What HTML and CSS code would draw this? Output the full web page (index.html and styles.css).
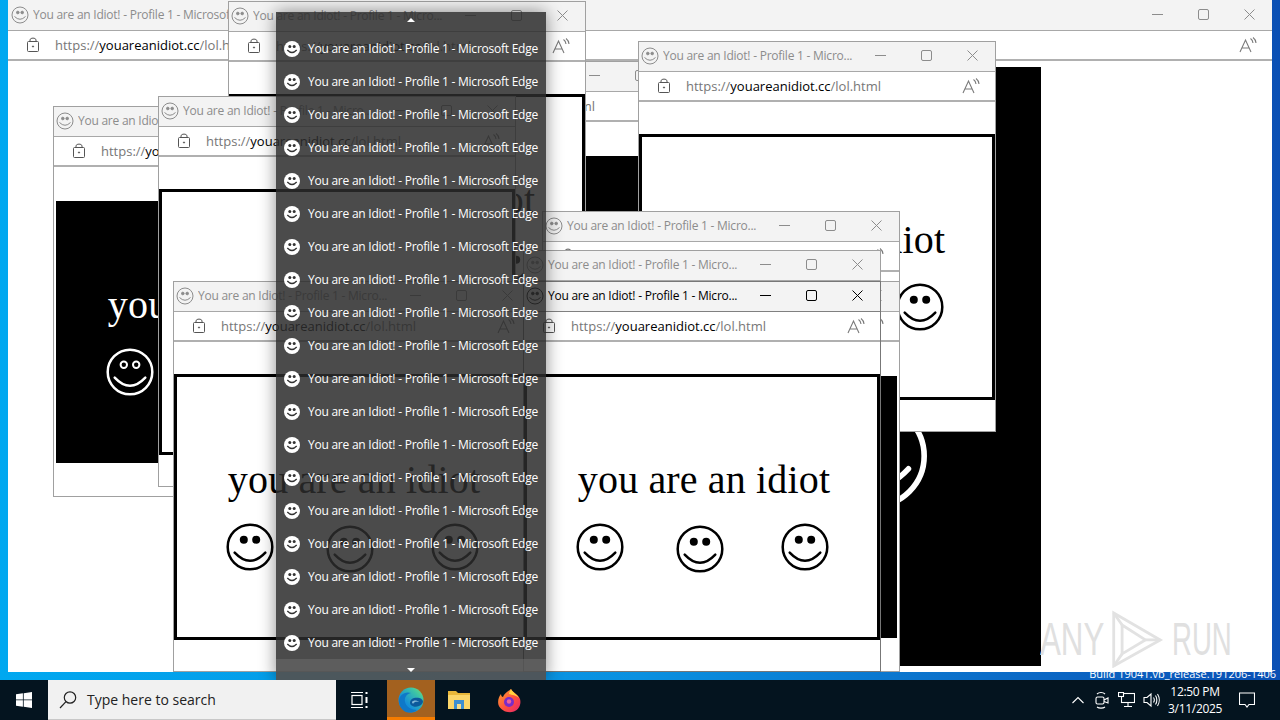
FILE: index.html
```html
<!DOCTYPE html>
<html lang="en">
  <head>
    <meta charset="UTF-8" />
    <title>You are an Idiot!</title>
    <link rel="stylesheet" href="styles.css">
  </head>
  <body>
    <div class="desktop" id="desktop">
      <div class="build">Build 19041.vb_release.191206-1406</div>

      <!-- windows go here, see script.js -->
      <div id="windows"></div>

      <div class="watermark">
        <span>ANY</span>
        <svg width="54" height="58" viewBox="0 0 58 62" fill="none" stroke="#e2e2e2" stroke-width="3">
          <path d="M4 3 L54 32 L4 60 Z" />
          <path d="M13 16 L38 32 L13 47 Z" />
          <path d="M4 3 L13 16 M54 32 L38 32 M4 60 L13 47" />
        </svg>
        <span>RUN</span>
      </div>

      <!-- Jump list -->
      <div class="jumplist">
        <div class="jump-top"><span class="arrow up"></span></div>
        <div class="jump-rows" id="jumpRows"></div>
        <div class="jump-bottom"><span class="arrow down"></span></div>
      </div>
    </div>

    <div class="taskbar">
      <div class="start">
        <svg width="16" height="16" viewBox="0 0 16 16" fill="#fff">
          <path d="M0 2.3 L6.9 1.3 V7.5 H0 Z" />
          <path d="M7.7 1.2 L16 0 V7.5 H7.7 Z" />
          <path d="M0 8.3 H6.9 V14.7 L0 13.7 Z" />
          <path d="M7.7 8.3 H16 V16 L7.7 14.8 Z" />
        </svg>
      </div>
      <div class="search">
        <svg width="20" height="20" viewBox="0 0 20 20" fill="none" stroke="#222" stroke-width="1.2">
          <circle cx="12" cy="7.5" r="5.7" />
          <path d="M8 11.6 L2 18" />
        </svg>
        <span>Type here to search</span>
      </div>
      <div class="task-btn">
        <svg width="18" height="18" viewBox="0 0 18 18" fill="none" stroke="#fff" stroke-width="1.2">
          <path d="M0 1.5 H12 M0 16.5 H12" />
          <rect x="1" y="4.5" width="10" height="9" />
          <path d="M15.5 1 V3 M15.5 6 V12 M15.5 15 V17" stroke-width="2" />
        </svg>
      </div>
      <div class="task-btn open">
        <svg width="26" height="26" viewBox="0 0 26 26">
          <defs>
            <linearGradient id="edgeA" x1="0" y1="1" x2="1" y2="0">
              <stop offset="0.35" stop-color="#1690d8" />
              <stop offset="0.75" stop-color="#3ec6a4" />
              <stop offset="1" stop-color="#86dc6a" />
            </linearGradient>
          </defs>
          <circle cx="13" cy="13" r="12.5" fill="url(#edgeA)" />
          <path d="M1 14 C1 8 7 4 13 6 C8 7 6 11 7 15 C8 20 14 23 19 23 C15 26 11 26 8 25 C4 23 1 19 1 14 Z" fill="#0f78c8" />
          <path d="M25 15 C25 11 20 10 16 11 C12 12 11 16 13 18 C16 21 21 20 24 17 Z" fill="#0c5a9c" />
          <path d="M14 15 C15 13 19 13 21 15 C18 14.500 16 15 15.500 16.500 C14.500 16.500 14 16 14 15 Z" fill="#7fb6d8" />
        </svg>
      </div>
      <div class="task-btn">
        <svg width="24" height="20" viewBox="0 0 24 20">
          <path d="M1 1 H9 L11 3 H23 V6 H1 Z" fill="#e8b73a" />
          <rect x="1" y="5" width="22" height="14" fill="#fbd66a" />
          <rect x="7" y="10" width="10" height="9" fill="#3d8fd1" />
          <rect x="10" y="14" width="4" height="5" fill="#f6dd8a" />
        </svg>
      </div>
      <div class="task-btn">
        <svg width="24" height="25" viewBox="0 0 24 25">
          <defs>
            <linearGradient id="foxA" x1="0" y1="0" x2="1" y2="1">
              <stop offset="0" stop-color="#ffa52e" />
              <stop offset="0.55" stop-color="#ff4f3e" />
              <stop offset="1" stop-color="#e3246f" />
            </linearGradient>
          </defs>
          <path d="M14 1 C15 4 21 6 23 11 C24.500 16 22 21.500 17 23.500 C11 25.500 4 23 1.500 17 C.5 13 1.500 9 4 6 C4 8 5 9 6 9 C7 6 10 4 14 1 Z" fill="url(#foxA)" />
          <path d="M14 1 C15 4 20 6 22 10 C19 7 15 7 12 6 C12 4 13 3 14 1 Z" fill="#ffd23e" />
          <circle cx="12" cy="14" r="5" fill="#7a2cc8" />
          <circle cx="12" cy="13.500" r="2.200" fill="#f0609a" />
        </svg>
      </div>

      <div class="tray">
        <svg class="tray-icon chevron" width="12" height="8" viewBox="0 0 12 8" fill="none" stroke="#fff" stroke-width="1.100"><path d="M.5 7 L6 1.500 L11.500 7" /></svg>
        <svg class="tray-icon" width="16" height="18" viewBox="0 0 16 18" fill="none" stroke="#fff" stroke-width="1.100">
          <rect x="2" y="6" width="8" height="7" rx="1.500" />
          <path d="M10 9 L14 7 V12 L10 10.500" />
          <path d="M3 3 C5 1 9 1 11 3 M3 16 C5 17.500 9 17.500 11 16" />
        </svg>
        <svg class="tray-icon" width="17" height="16" viewBox="0 0 17 16" fill="none" stroke="#fff" stroke-width="1.100">
          <rect x="3.500" y="1.500" width="13" height="9" />
          <path d="M10 10.500 V14.500 M6 14.500 H14" />
          <rect x=".5" y=".5" width="5" height="4" fill="#04141f" />
        </svg>
        <svg class="tray-icon" width="17" height="16" viewBox="0 0 17 16" fill="none" stroke="#fff" stroke-width="1.100">
          <path d="M1 5.500 H4 L8 2 V14 L4 10.500 H1 Z" />
          <path d="M10.500 5.500 C11.500 7 11.500 9 10.500 10.500 M12.500 3.500 C14.300 6 14.300 10 12.500 12.500 M14.500 2 C16.800 5.500 16.800 10.500 14.500 14" />
        </svg>
        <div class="clock">
          <div>12:50 PM</div>
          <div>3/11/2025</div>
        </div>
        <div class="notify">
          <svg width="16" height="16" viewBox="0 0 16 16" fill="none" stroke="#fff" stroke-width="1.100">
            <path d="M.5 1 H15.500 V12.500 H10 L8 15 L6 12.500 H.5 Z" />
          </svg>
        </div>
      </div>
    </div>

    <script src="script.js"></script>
  </body>
</html>
```

FILE: styles.css
```css
body {
  margin: 0;
  width: 1280px;
  height: 720px;
  display: flex;
  flex-direction: column;
  overflow: hidden;
  font-family: "Open Sans", "Noto Sans", sans-serif;
}

/* Desktop */
.desktop {
  position: relative;
  height: 680px;
  overflow: hidden;
  background: linear-gradient(90deg, #00a8f0 0%, #0a90e0 50%, #0a4fb4 100%);
}

.build {
  position: absolute;
  right: 4px;
  bottom: -1px;
  color: #fff;
  font-size: 11px;
  line-height: 14px;
}

/* Browser windows */
.window {
  position: absolute;
  box-sizing: border-box;
  width: 358px;
  height: 391px;
  display: flex;
  flex-direction: column;
  background: #fff;
  border: 1px solid #a0a0a0;
  color: #8c8c8c;
}

.window.max {
  width: 1264px;
  height: 672px;
  border-width: 1px 0 0;
  border-color: #f3f3f3;
}

.window.active {
  color: #000;
  border-color: #777;
}

.titlebar {
  box-sizing: border-box;
  height: 30px;
  flex: none;
  display: flex;
  align-items: center;
  padding-bottom: 2px;
  background: #f3f3f3;
  border-bottom: 1px solid #a8a8a8;
}

.window.active .titlebar {
  border-bottom-color: #808080;
}

.face {
  flex: none;
  width: 18px;
  height: 18px;
  margin: 0 4px 0 2px;
}

.window.max .face {
  margin-left: 3px;
}

.title {
  flex: 1;
  min-width: 0;
  font-size: 12px;
  letter-spacing: -0.24px;
  white-space: nowrap;
  overflow: hidden;
}

.ctrl {
  flex: none;
  width: 46px;
  height: 28px;
  display: flex;
  align-items: center;
  justify-content: center;
}

.address {
  box-sizing: border-box;
  height: 30px;
  flex: none;
  display: flex;
  align-items: center;
  padding-bottom: 1px;
  background: #fff;
  border-bottom: 2px solid #b0b0b0;
  color: #6f6f6f;
}

.lock {
  flex: none;
  margin: 0 16px 0 19px;
}

.url {
  flex: 1;
  font-size: 13px;
  white-space: nowrap;
  overflow: hidden;
  color: #777;
}

.url b {
  font-weight: 400;
  color: #000;
}

.aloud {
  flex: none;
  margin-right: 15px;
}

.content {
  flex: 1;
  min-height: 0;
  display: flex;
  align-items: center;
  justify-content: center;
  overflow: hidden;
}

/* the box with the text and the smileys */
.box {
  box-sizing: border-box;
  flex: none;
  width: 356px;
  height: 266px;
  padding-top: 80px;
  border: 3px solid #000;
  background: #fff;
  color: #000;
  font-family: "Liberation Serif", serif;
}

.box.dark {
  background: #000;
  color: #fff;
  border: 2px solid #fff;
  padding-top: 81px;
}

.box.big {
  zoom: 2.25;
  border-color: #000;
}

.box.big .smileys {
  padding-left: 3px;
}

.idiot {
  padding-left: 4px;
  font-size: 40px;
  line-height: 46px;
  letter-spacing: 0.15px;
  text-align: center;
  white-space: nowrap;
}

.smileys {
  display: flex;
  justify-content: center;
  align-items: flex-start;
  margin-top: 20px;
}

.smiley {
  width: 48px;
  height: 48px;
}

.smiley:nth-child(2) {
  margin: 2px 57px 0 52px;
}

/* Jump list */
.jumplist {
  position: absolute;
  top: 12px;
  left: 276px;
  width: 270px;
  height: 668px;
  display: flex;
  flex-direction: column;
  background: rgba(44, 44, 44, 0.85);
  box-shadow: 0 0 16px rgba(0, 0, 0, 0.45);
  color: #fff;
}

.jump-top {
  height: 20px;
  flex: none;
  display: flex;
  align-items: center;
  justify-content: center;
}

.jump-rows {
  flex: 1;
}

.jump-row {
  height: 33px;
  display: flex;
  align-items: center;
  font-size: 12px;
  letter-spacing: -0.24px;
  white-space: nowrap;
}

.jump-row svg {
  flex: none;
  width: 16px;
  height: 16px;
  margin: 0 8px;
}

.jump-bottom {
  height: 21px;
  flex: none;
  display: flex;
  align-items: flex-end;
  justify-content: center;
  padding-bottom: 8px;
  box-sizing: border-box;
  background: rgba(110, 110, 110, 0.55);
}

.arrow {
  width: 0;
  height: 0;
  border-left: 4px solid transparent;
  border-right: 4px solid transparent;
}

.arrow.up {
  border-bottom: 4px solid #fff;
  margin-bottom: 4px;
}

.arrow.down {
  border-top: 4px solid #fff;
}

/* Watermark */
.watermark {
  position: absolute;
  left: 1040px;
  top: 610px;
  display: flex;
  align-items: center;
  color: #e0e0e0;
  font-family: "Liberation Sans", sans-serif;
  font-size: 46px;
  line-height: 58px;
}

.watermark span {
  width: 64px;
  transform: scaleX(0.68);
  transform-origin: left;
  white-space: nowrap;
}

.watermark span:last-child {
  transform: scaleX(0.6);
}

.watermark svg {
  margin: 0 8px 0 6px;
}

/* Taskbar */
.taskbar {
  height: 40px;
  flex: none;
  display: flex;
  align-items: stretch;
  background: #04141f;
  color: #fff;
}

.start {
  width: 48px;
  display: flex;
  align-items: center;
  justify-content: center;
}

.search {
  box-sizing: border-box;
  width: 288px;
  display: flex;
  align-items: center;
  gap: 9px;
  padding-left: 10px;
  background: #f1f1f1;
  border-bottom: 1px solid #c8c8c8;
  color: #222;
  font-size: 14px;
}

.task-btn {
  box-sizing: border-box;
  width: 48px;
  display: flex;
  align-items: center;
  justify-content: center;
}

.search + .task-btn {
  margin-right: 3px;
}

.task-btn.open {
  background: #a3611f;
  border-bottom: 3px solid #f57c00;
  padding-top: 3px;
}

.task-btn + .task-btn + .task-btn {
  margin-right: 2px;
}

.tray {
  margin-left: auto;
  display: flex;
  align-items: center;
}

.tray-icon {
  margin-right: 8px;
}

.tray-icon.chevron {
  margin-right: 10px;
}

.clock {
  width: 54px;
  text-align: center;
  font-size: 12px;
  line-height: 17px;
  letter-spacing: -0.3px;
  white-space: nowrap;
}

.notify {
  width: 50px;
  margin-right: 8px;
  display: flex;
  justify-content: center;
}
```

FILE: script.js
```js
var SHORT_TITLE = "You are an Idiot! - Profile 1 - Micro...";
var FULL_TITLE = "You are an Idiot! - Profile 1 - Microsoft Edge";

// bottom to top
var windows = [
  { left: 8, top: 0, max: true, dark: true },
  { left: 352, top: 61, dark: true },
  { left: 638, top: 41 },
  { left: 228, top: 1 },
  { left: 53, top: 106, dark: true },
  { left: 158, top: 96 },
  { left: 173, top: 281 },
  { left: 542, top: 211 },
  { left: 542, top: 281, dark: true },
  { left: 523, top: 250 },
  { left: 523, top: 281, active: true }
];

function bigSmiley(dark) {
  var eyes = dark
    ? 'fill="none" stroke="currentColor" stroke-width="2"'
    : 'fill="currentColor" stroke="none"';
  return (
    '<svg class="smiley" viewBox="0 0 48 48" fill="none" stroke="currentColor" stroke-width="2.5">' +
    '<circle cx="24" cy="24" r="22.300" />' +
    '<circle cx="17.800" cy="16.700" ' + eyes + ' r="' + (dark ? 3.2 : 4) + '" />' +
    '<circle cx="30.200" cy="16.700" ' + eyes + ' r="' + (dark ? 3.2 : 4) + '" />' +
    '<path d="M8.700 29.700 Q24 46 39.300 29.700" stroke-linecap="round" />' +
    "</svg>"
  );
}

var faceIcon =
  '<svg class="face" viewBox="0 0 18 18" fill="none" stroke="currentColor" stroke-width="1">' +
  '<circle cx="9" cy="9" r="8" />' +
  '<circle cx="6.800" cy="6.500" r="1.300" fill="currentColor" /><circle cx="11.200" cy="6.500" r="1.300" fill="currentColor" />' +
  '<path d="M3.500 10.500 Q9 16 14.500 10.500" />' +
  "</svg>";

var ctrlMin = '<svg width="11" height="11" viewBox="0 0 11 11" stroke="currentColor"><path d="M0 5.500 H11" /></svg>';
var ctrlMax = '<svg width="11" height="11" viewBox="0 0 11 11" fill="none" stroke="currentColor"><rect x=".5" y=".5" width="10" height="10" rx="1.500" /></svg>';
var ctrlClose = '<svg width="11" height="11" viewBox="0 0 11 11" stroke="currentColor"><path d="M.5 .5 L10.500 10.500 M10.500 .5 L.5 10.500" /></svg>';

var lockIcon =
  '<svg class="lock" width="12" height="15" viewBox="0 0 12 15" fill="none" stroke="#555" stroke-width="1">' +
  '<rect x=".5" y="4.500" width="11" height="10" rx="1" />' +
  '<path d="M3 4.500 V3 C3 .5 9 .5 9 3 V4.500" />' +
  '<circle cx="6" cy="9.500" r=".6" fill="#555" />' +
  "</svg>";

var aloudIcon =
  '<svg class="aloud" width="18" height="16" viewBox="0 0 18 16" fill="none" stroke="#7a7a7a" stroke-width="1.100">' +
  '<path d="M1 15 L6.500 3 L12 15 M3 11 H10" />' +
  '<path d="M11.500 1.500 C13 2.500 13.800 4 14 6 M14 .5 C15.800 1.800 16.800 3.800 17 6" />' +
  "</svg>";

var menuFace =
  '<svg viewBox="0 0 16 16">' +
  '<circle cx="8" cy="8" r="8" fill="#fff" />' +
  '<circle cx="5.800" cy="5.600" r="1.500" fill="#333" /><circle cx="10.200" cy="5.600" r="1.500" fill="#333" />' +
  '<path d="M3.300 9 Q8 14 12.700 9" fill="none" stroke="#333" stroke-width="1.300" />' +
  "</svg>";

function windowHtml(w) {
  var cls = "window" + (w.max ? " max" : "") + (w.active ? " active" : "");
  var boxCls = "box" + (w.dark ? " dark" : "") + (w.max ? " big" : "");
  return (
    '<div class="' + cls + '" style="left:' + w.left + "px;top:" + w.top + 'px">' +
    '<div class="titlebar">' + faceIcon +
    '<div class="title">' + (w.max ? FULL_TITLE : SHORT_TITLE) + "</div>" +
    '<div class="ctrl">' + ctrlMin + "</div>" +
    '<div class="ctrl">' + ctrlMax + "</div>" +
    '<div class="ctrl">' + ctrlClose + "</div>" +
    "</div>" +
    '<div class="address">' + lockIcon +
    '<div class="url">https://<b>youareanidiot.cc</b>/lol.html</div>' + aloudIcon +
    "</div>" +
    '<div class="content"><div class="' + boxCls + '">' +
    '<div class="idiot">you are an idiot</div>' +
    '<div class="smileys">' + bigSmiley(w.dark) + bigSmiley(w.dark) + bigSmiley(w.dark) + "</div>" +
    "</div></div>" +
    "</div>"
  );
}

document.getElementById("windows").innerHTML = windows.map(windowHtml).join("");

var rows = "";
for (var i = 0; i < 19; i++) {
  rows += '<div class="jump-row">' + menuFace + "<span>" + FULL_TITLE + "</span></div>";
}
document.getElementById("jumpRows").innerHTML = rows;
```
